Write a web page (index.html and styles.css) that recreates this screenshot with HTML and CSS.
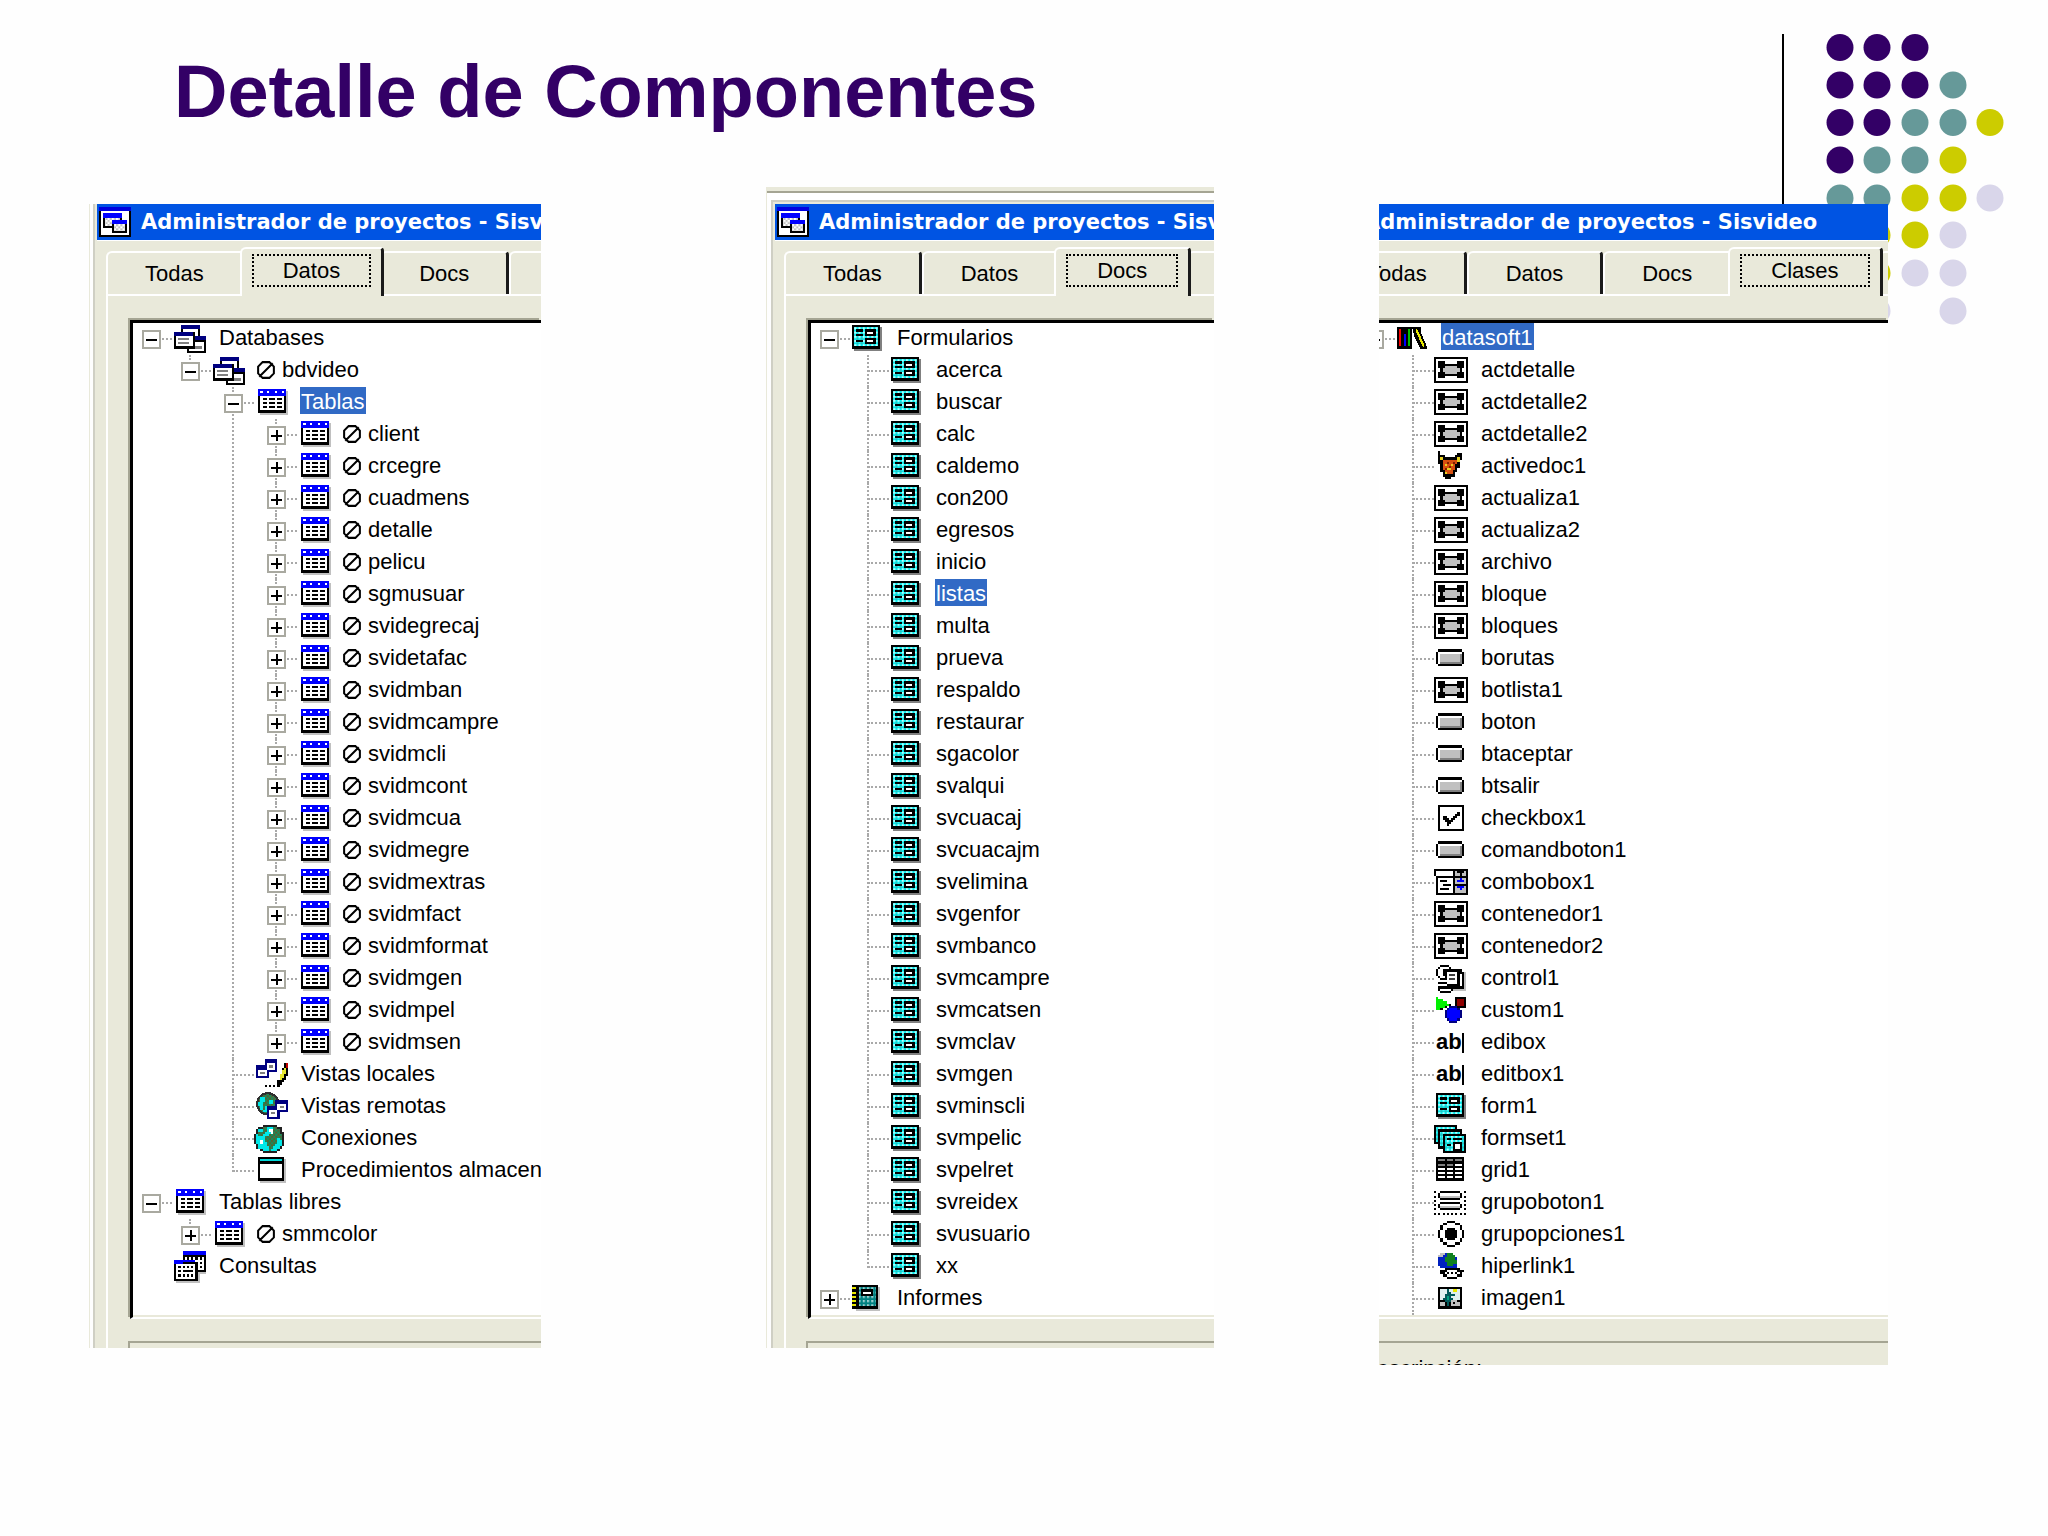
FILE: index.html
```html
<!DOCTYPE html>
<html lang="es">
<head>
    <meta charset="UTF-8">
    <meta name="viewport" content="width=device-width, initial-scale=1.0">
    <title>Detalle de Componentes</title>
    <link rel="stylesheet" href="styles.css">
</head>
<body>

    <!-- icon set -->
    <svg class="sprite" aria-hidden="true">
        <defs>
            <pattern id="dither" width="2" height="2" patternUnits="userSpaceOnUse">
                <rect width="2" height="2" fill="#00f0f0"/>
                <rect width="1" height="1" fill="#b8ffff"/>
                <rect x="1" y="1" width="1" height="1" fill="#30b8b8"/>
            </pattern>
            <pattern id="dither-gray" width="2" height="2" patternUnits="userSpaceOnUse">
                <rect width="2" height="2" fill="#fff"/>
                <rect width="1" height="1" fill="#c0c0c0"/>
                <rect x="1" y="1" width="1" height="1" fill="#c0c0c0"/>
            </pattern>
            <pattern id="dither-teal" width="2" height="2" patternUnits="userSpaceOnUse">
                <rect width="2" height="2" fill="#008080"/>
                <rect width="1" height="1" fill="#a0d0d0"/>
            </pattern>
            <pattern id="dither-land" width="2" height="2" patternUnits="userSpaceOnUse">
                <rect width="2" height="2" fill="#109060"/>
                <rect width="1" height="1" fill="#586030"/>
                <rect x="1" y="1" width="1" height="1" fill="#586030"/>
            </pattern>
        </defs>
        <symbol id="app" viewBox="0 0 15 14">
            <path fill="#000" d="M0 0h15v14H0z"/>
            <path fill="#fff" d="M1 2h13v11H1z"/>
            <path fill="#0000e0" d="M0 0h15v2H0z"/>
            <path fill="#000" d="M2 3h9v7H2z"/>
            <path fill="url(#dither-gray)" d="M3 5h7v4H3z"/>
            <path fill="#00f" d="M2 3h9v2H2z"/>
            <path fill="#000" d="M6 6h7v6H6z"/>
            <path fill="url(#dither-gray)" d="M7 8h5v3H7z"/>
            <path fill="#00f" d="M6 6h7v2H6z"/>
        </symbol>
        <symbol id="db" viewBox="0 0 16 15">
            <path fill="#000" d="M4 1h9v5H4z"/>
            <path fill="#fff" d="M5 3h7v3H5z"/>
            <path fill="#000080" d="M4 1h9v2H4z"/>
            <path fill="#000" d="M7 6h9v8H7z"/>
            <path fill="#fff" d="M8 9h7v4H8z"/>
            <path fill="#000080" d="M9 6h7v2H9z"/>
            <path fill="#808080" d="M10 11h4v1h-4z"/>
            <path fill="#000" d="M1 4h10v8H1z"/>
            <path fill="#fff" d="M2 6h8v5H2z"/>
            <path fill="#000080" d="M1 4h9v2H1z"/>
            <path fill="#808080" d="M3 7h5v1H3zM3 9h5v1H3z"/>
        </symbol>
        <symbol id="table" viewBox="0 0 16 15">
            <path fill="#c0c0c0" d="M3 2h13v11H3z"/>
            <path fill="#000" d="M2 1h13v11H2z"/>
            <path fill="#fff" d="M3 4h11v7H3z"/>
            <path fill="#00f" d="M2 1h13v3H2z"/>
            <path fill="#fff" d="M3 2h1v1H3zM6 2h1v1H6zM10 2h1v1h-1zM13 2h1v1h-1z"/>
            <path fill="#000" d="M4 5h2v1H4zM7 5h3v1H7zM11 5h2v1h-2zM4 7h2v1H4zM7 7h3v1H7zM11 7h2v1h-2zM4 9h2v1H4zM7 9h3v1H7zM11 9h2v1h-2z"/>
        </symbol>
        <symbol id="query" viewBox="0 0 16 15">
            <path fill="#c0c0c0" d="M6 2h10v9H6zM2 6h11v9H2z"/>
            <path fill="#000" d="M5 1h11v9H5z"/>
            <path fill="#fff" d="M6 3h9v6H6z"/>
            <path fill="#00f" d="M5 0h11v2H5z"/>
            <path fill="#000" d="M7 3h1v1H7zM9 3h1v1H9zM11 3h1v1h-1zM13 3h1v1h-1zM13 5h1v1h-1zM13 7h1v1h-1z"/>
            <path fill="#000" d="M1 5h11v9H1z"/>
            <path fill="#fff" d="M2 6h9v7H2z"/>
            <path fill="#00f" d="M1 4h10v2H1z"/>
            <path fill="#000" d="M5 5h7v1H5zM3 7h1v1H3zM5 7h1v1H5zM7 7h1v1H7zM9 7h1v1H9zM3 9h1v1H3zM5 9h5v1H5zM3 11h1v1H3zM5 11h1v1H5zM7 11h1v1H7zM9 11h1v1H9z"/>
        </symbol>
        <symbol id="localview" viewBox="0 0 16 15">
            <path fill="#000080" d="M5 0h6v6H5zM1 3h6v6H1z"/>
            <path fill="#fff" d="M6 2h4v3H6zM2 5h4v3H2z"/>
            <path fill="#808080" d="M7 3h2v1H7zM3 6h2v1H3z"/>
            <path fill="#000" d="M14 2h3v3h-1v3h-1v2h-1v1h-1v1h-1v1h-1v-3h1V7h1V4h1z"/>
            <path fill="#e8e830" d="M14 4h1v3h-1v2h-1v1h-1V7h1V5h1z"/>
            <path fill="#c00000" d="M15 2h1v2h-1z"/>
            <path fill="#000" d="M5 12h1v1H5zM7 12h1v1H7zM9 12h1v1H9z"/>
        </symbol>
        <symbol id="remoteview" viewBox="0 0 16 15">
            <circle cx="6.500" cy="6" r="5.500" fill="#303030"/>
            <circle cx="6.500" cy="6" r="4.500" fill="url(#dither-land)"/>
            <path fill="#00e8e8" d="M3 3h2v2H3zM2 5h2v4H3V7H2zM7 4h2v2H7zM5 7h2v2H5zM4 9h2v1H4z"/>
            <path fill="#000080" d="M10 4h6v6h-6zM6 7h6v6H6z"/>
            <path fill="#fff" d="M11 6h4v3h-4zM7 9h4v3H7z"/>
            <path fill="#808080" d="M12 7h2v1h-2zM8 10h2v1H8z"/>
        </symbol>
        <symbol id="globe" viewBox="0 0 16 15">
            <path fill="#202020" d="M4 1h7v1h2v2h1v7h-1v1h-1v1h-1v1H4v-1H3v-1H1v-2H0V5h1V3h1V2h2z"/>
            <path fill="#00e8e8" d="M4 2h7v1h1v2h1v6h-1v1h-1v1H4v-1H2v-2H1V5h1V3h2z"/>
            <path fill="url(#dither-land)" d="M4 2h2v2H5v1H4v1H2V4h2zM9 2h2v1h1v2h1v3h-1V7h-1v3h-1v1H9v1H8v1H7v-2H6V9H5V6h2V5h2z"/>
            <path fill="#fff" d="M7 3h2v2H8V4H7zM3 8h1v2H3z"/>
        </symbol>
        <symbol id="proc" viewBox="0 0 16 15">
            <path fill="#c0c0c0" d="M3 2h12v11H3z"/>
            <path fill="#000" d="M2 1h12v11H2z"/>
            <path fill="#fff" d="M3 4h10v7H3z"/>
            <path fill="#00d8d8" d="M3 2h10v1H3z"/>
        </symbol>
        <symbol id="form" viewBox="0 0 16 15">
            <path fill="#808080" d="M2 2h13v11H2z"/>
            <path fill="#000" d="M1 1h13v11H1z"/>
            <path fill="url(#dither)" d="M2 2h11v9H2z"/>
            <path fill="#000" d="M3 3h3v1H3zM3 5h3v1H3zM3 8h3v1H3zM7 3h5v3H7zM7 7h5v3H7z"/>
            <path fill="#fff" d="M8 4h3v1H8zM8 8h3v1H8z"/>
        </symbol>
        <symbol id="report" viewBox="0 0 16 15">
            <path fill="#c0c0c0" d="M3 2h11v11H3z"/>
            <path fill="#000" d="M2 1h11v11H2zM1 1h1v1H1zM1 3h1v1H1zM1 5h1v1H1zM1 7h1v1H1zM1 9h1v1H1zM1 11h1v1H1z"/>
            <path fill="#e8e800" d="M1 2h2v1H1zM1 4h2v1H1zM1 6h2v1H1zM1 8h2v1H1zM1 10h2v1H1z"/>
            <path fill="url(#dither-teal)" d="M4 2h8v9H4z"/>
            <path fill="#000" d="M5 3h6v3H5z"/>
            <path fill="#fff" d="M6 4h4v1H6z"/>
        </symbol>
        <symbol id="books" viewBox="0 0 16 15">
            <path fill="#000" d="M1 2h7v10H1zM8 2h4v2l3 7v1h-3l-3-6z"/>
            <path fill="#f00" d="M2 3h1v8H2z"/>
            <path fill="#00f" d="M4 5h1v6H4z"/>
            <path fill="#00c000" d="M6 3h1v8H6z"/>
            <path fill="none" stroke="#e8e800" d="M10 3l3.500 8"/>
        </symbol>
        <symbol id="container" viewBox="0 0 16 15">
            <path fill="#000" d="M0 1h16v12H0z"/>
            <path fill="#fff" d="M1 2h14v10H1z"/>
            <path fill="#000" d="M3 4h10v6H3zM2 3h3v3H2zM11 3h3v3h-3zM2 8h3v3H2zM11 8h3v3h-3z"/>
            <path fill="#c0c0c0" d="M5 5h6v4H5zM4 6h1v2H4zM11 6h1v2h-1z"/>
        </symbol>
        <symbol id="fox" viewBox="0 0 16 15">
            <path fill="#000" d="M2 0h1v2h2v1h5V2h1V1h2v3h-1v4h-1v2h-1v2H8v1H5v-1H4v-2H3V6H2z"/>
            <path fill="#d85010" d="M4 4h7v2h-1v3H9v2H5V9H4z"/>
            <path fill="#e8d020" d="M3 3h1v1H3zM11 3h1v2h-1zM5 6h1v1H5zM8 6h1v1H8zM6 8h2v1H6zM5 10h1v1H5z"/>
            <path fill="#802000" d="M6 5h1v1H6zM9 5h1v1H9zM7 7h1v1H7zM5 8h1v1H5z"/>
        </symbol>
        <symbol id="button" viewBox="0 0 16 15">
            <path fill="#000" d="M2 3h11v1h1v6h-1v1H2v-1H1V4h1z"/>
            <path fill="#fff" d="M2 4h11v6H2z"/>
            <path fill="#808080" d="M3 9h9V5h1v5H3z"/>
            <path fill="#c0c0c0" d="M3 5h9v4H3z"/>
        </symbol>
        <symbol id="check" viewBox="0 0 16 15">
            <path fill="#000" d="M2 1h12v12H2z"/>
            <path fill="#fff" d="M3 2h10v10H3z"/>
            <path fill="#000" d="M4 6h2v1h1v1h1V7h1V6h1V5h1V4h1v2h-1v1h-1v1H9v1H8v1H7v1H6V9H5V8H4z"/>
        </symbol>
        <symbol id="combo" viewBox="0 0 16 15">
            <path fill="#000" d="M0 1h16v12H1V4H0z"/>
            <path fill="#fff" d="M1 2h8v2H1zM2 5h7v7H2z"/>
            <path fill="#c0c0c0" d="M10 2h5v2h-5zM10 5h5v3h-5zM10 9h5v3h-5z"/>
            <path fill="#000" d="M3 6h3v1H3zM4 8h4v1H4zM3 10h4v1H3zM11 2h3v1h-3zM12 3h1v1h-1z"/>
            <path fill="#00f" d="M12 5h1v1h-1zM11 6h3v1h-3zM11 9h3v1h-3zM12 10h1v1h-1z"/>
        </symbol>
        <symbol id="control" viewBox="0 0 16 15">
            <path fill="#c0c0c0" d="M7 4h8v9H7z"/>
            <path fill="#000" d="M3 1h4v1H3zM2 2h1v1H2zM7 2h1v1H7zM1 3h1v3H1zM2 6h1v1H2zM4 3h2v3H4zM3 7h3v1H3zM5 3h8v1h1v8H7v-1H6V8H5z"/>
            <path fill="#fff" d="M6 4h5v6H6zM12 5h1v6h-1z"/>
            <path fill="#404040" d="M7 5h3v1H7zM7 7h3v1H7z"/>
            <path fill="#000" d="M2 9h4v1H2zM3 11h5v1h1v1H8v1H3v-1H2v-2h1z"/>
            <path fill="#fff" d="M3 12h5v1H3z"/>
        </symbol>
        <symbol id="custom" viewBox="0 0 16 15">
            <path fill="#000" d="M1 1h1v1h2v1h2v1h2v1H6v1H4v1H1z"/>
            <path fill="#00f000" d="M1 1h1v1h2v1h2v1h1v1H5v1H3v1H1z"/>
            <path fill="#000" d="M10 1h5v5h-5z"/>
            <path fill="#900000" d="M11 2h3v3h-3z"/>
            <path fill="#000080" d="M7 5h4v1h1v1h1v4h-1v1h-1v1H7v-1H6v-1H5V7h1V6h1z"/>
            <path fill="#00f" d="M7 6h4v1h1v4h-1v1H7v-1H6V7h1z"/>
        </symbol>
        <symbol id="formset" viewBox="0 0 16 15">
            <path fill="#000" d="M0 1h11v9H0z"/>
            <path fill="url(#dither)" d="M1 2h9v7H1z"/>
            <path fill="#000" d="M2 3h11v9H2z"/>
            <path fill="url(#dither)" d="M3 4h9v7H3z"/>
            <path fill="#000" d="M4 5h11v9H4z"/>
            <path fill="url(#dither)" d="M5 6h9v7H5z"/>
            <path fill="#000" d="M6 7h2v1H6zM9 7h4v1H9zM6 10h2v1H6zM9 9h4v4H9z"/>
            <path fill="#fff" d="M10 10h2v2h-2z"/>
        </symbol>
        <symbol id="grid" viewBox="0 0 16 15">
            <path fill="#000" d="M1 1h13v11H1z"/>
            <path fill="#808080" d="M2 2h3v1H2zM6 2h3v1H6zM10 2h3v1h-3zM2 4h3v1H2zM6 4h3v1H6z"/>
            <path fill="#fff" d="M10 4h3v1h-3zM2 6h3v1H2zM6 6h3v1H6zM10 6h3v1h-3zM2 8h3v1H2zM6 8h3v1H6zM10 8h3v1h-3zM2 10h3v1H2zM6 10h3v1H6zM10 10h3v1h-3z"/>
        </symbol>
        <symbol id="buttongroup" viewBox="0 0 16 15">
            <path fill="none" stroke="#000" stroke-dasharray="1 1" d="M0.500 2v11M14.500 2v11M0 12.500h15"/>
            <path fill="#000" d="M3 2h9v1h1v2h-1v1H3V5H2V3h1zM3 7h9v1h1v2h-1v1H3v-1H2V8h1z"/>
            <path fill="#fff" d="M3 3h9v1H3zM3 8h9v1H3z"/>
            <path fill="#c0c0c0" d="M3 4h9v1H3zM3 9h9v1H3z"/>
        </symbol>
        <symbol id="radio" viewBox="0 0 16 15">
            <path fill="#000" d="M6 1h4v1h2v1h1v2h1v4h-1v2h-1v1h-2v1H6v-1H4v-1H3V9H2V5h1V3h1V2h2z"/>
            <path fill="#fff" d="M6 2h4v1h2v2h1v4h-1v2h-2v1H6v-1H4V9H3V5h1V3h2z"/>
            <path fill="#000" d="M6 4h4v1h1v4h-1v1H6V9H5V5h1z"/>
        </symbol>
        <symbol id="link" viewBox="0 0 16 15">
            <path fill="#0020c0" d="M4 1h5v1h1v1h1v5H9v1H5V8H3V7H2V3h2z"/>
            <path fill="#108020" d="M6 1h3v1h1v2h1v2H9v1H6V5H5V3h1z"/>
            <path fill="#c0c0c0" d="M3 1h2v1H3zM2 2h2v1H2z"/>
            <path fill="#000" d="M5 8h7v1h2v1h-1v2h-2v1H6v-1H4v-1H3V9h2z"/>
            <path fill="#fff" d="M5 10h1V9h5v1h1v1h-1v1H6v-1H5z"/>
            <path fill="#000" d="M6 10h1v1H6zM8 10h1v1H8zM10 10h1v1h-1z"/>
        </symbol>
        <symbol id="image" viewBox="0 0 16 15">
            <path fill="#000" d="M2 2h11v10H2z"/>
            <path fill="#e0f0f0" d="M3 3h9v5H3z"/>
            <path fill="#c0c0c0" d="M3 9h2v2H3zM8 8h4v3H8z"/>
            <path fill="#005858" d="M6 3h1v1h1v1h2v1H8v1h1v1H8v1H7v2H6V9H5V8H4V7h1V5h1z"/>
            <path fill="#00a080" d="M6 6h1v2H6z"/>
            <path fill="#e8e800" d="M9 3h2v1H9z"/>
            <path fill="#000" d="M9 9h1v1H9zM11 8h1v1h-1zM3 8h1v1H3z"/>
        </symbol>
        <symbol id="excluded" viewBox="0 0 8 8">
            <path fill="none" stroke="#000" stroke-width="0.900" d="M2.500 0.500h3l2 2v3l-2 2h-3l-2-2v-3zM1 7l6-6"/>
        </symbol>
    </svg>

    <header class="slide-header">
        <h1>Detalle de Componentes</h1>
        <svg class="dots" width="222" height="300" viewBox="0 0 222 300" aria-hidden="true">
            <path stroke="#000" stroke-width="2" d="M1 0v180"/>
            <g fill="#330066">
                <circle cx="58" cy="13.500" r="13.500"/><circle cx="95" cy="13.500" r="13.500"/><circle cx="133" cy="13.500" r="13.500"/>
                <circle cx="58" cy="51" r="13.500"/><circle cx="95" cy="51" r="13.500"/><circle cx="133" cy="51" r="13.500"/>
                <circle cx="58" cy="88.500" r="13.500"/><circle cx="95" cy="88.500" r="13.500"/>
                <circle cx="58" cy="126" r="13.500"/>
            </g>
            <g fill="#669999">
                <circle cx="171" cy="51" r="13.500"/>
                <circle cx="133" cy="88.500" r="13.500"/><circle cx="171" cy="88.500" r="13.500"/>
                <circle cx="95" cy="126" r="13.500"/><circle cx="133" cy="126" r="13.500"/>
                <circle cx="58" cy="164" r="13.500"/><circle cx="95" cy="164" r="13.500"/>
            </g>
            <g fill="#cccc00">
                <circle cx="208" cy="88.500" r="13.500"/>
                <circle cx="171" cy="126" r="13.500"/>
                <circle cx="133" cy="164" r="13.500"/><circle cx="171" cy="164" r="13.500"/>
                <circle cx="95" cy="201" r="13.500"/><circle cx="133" cy="201" r="13.500"/>
                <circle cx="95" cy="239" r="13.500"/>
            </g>
            <g fill="#d9d6ea">
                <circle cx="208" cy="164" r="13.500"/>
                <circle cx="171" cy="201" r="13.500"/>
                <circle cx="133" cy="239" r="13.500"/><circle cx="171" cy="239" r="13.500"/>
                <circle cx="95" cy="277" r="13.500"/><circle cx="171" cy="277" r="13.500"/>
            </g>
        </svg>
    </header>

    <main class="shots">

        <!-- Datos -->
        <section class="shot shot-datos">
            <div class="window">
                <div class="titlebar"><svg class="app-icon"><use href="#app"/></svg>Administrador de proyectos - Sisvideo</div>
                <div class="tabs">
                    <button class="tab">Todas</button>
                    <button class="tab selected"><span>Datos</span></button>
                    <button class="tab">Docs</button>
                    <button class="tab" aria-label="Clases"></button>
                </div>
                <div class="page">
                    <ul class="tree">
                        <li><div class="row"><button class="toggle open" aria-label="Databases"></button><svg class="icon"><use href="#db"/></svg><a href="#">Databases</a></div>
                            <ul>
                                <li><div class="row"><button class="toggle open" aria-label="bdvideo"></button><svg class="icon"><use href="#db"/></svg><svg class="excluded"><use href="#excluded"/></svg><a href="#">bdvideo</a></div>
                                    <ul class="deep">
                                        <li><div class="row"><button class="toggle open" aria-label="Tablas"></button><svg class="icon"><use href="#table"/></svg><a href="#" class="current">Tablas</a></div>
                                            <ul class="deep">
                                                <li><div class="row"><button class="toggle" aria-label="client"></button><svg class="icon"><use href="#table"/></svg><svg class="excluded"><use href="#excluded"/></svg><a href="#">client</a></div></li>
                                                <li><div class="row"><button class="toggle" aria-label="crcegre"></button><svg class="icon"><use href="#table"/></svg><svg class="excluded"><use href="#excluded"/></svg><a href="#">crcegre</a></div></li>
                                                <li><div class="row"><button class="toggle" aria-label="cuadmens"></button><svg class="icon"><use href="#table"/></svg><svg class="excluded"><use href="#excluded"/></svg><a href="#">cuadmens</a></div></li>
                                                <li><div class="row"><button class="toggle" aria-label="detalle"></button><svg class="icon"><use href="#table"/></svg><svg class="excluded"><use href="#excluded"/></svg><a href="#">detalle</a></div></li>
                                                <li><div class="row"><button class="toggle" aria-label="pelicu"></button><svg class="icon"><use href="#table"/></svg><svg class="excluded"><use href="#excluded"/></svg><a href="#">pelicu</a></div></li>
                                                <li><div class="row"><button class="toggle" aria-label="sgmusuar"></button><svg class="icon"><use href="#table"/></svg><svg class="excluded"><use href="#excluded"/></svg><a href="#">sgmusuar</a></div></li>
                                                <li><div class="row"><button class="toggle" aria-label="svidegrecaj"></button><svg class="icon"><use href="#table"/></svg><svg class="excluded"><use href="#excluded"/></svg><a href="#">svidegrecaj</a></div></li>
                                                <li><div class="row"><button class="toggle" aria-label="svidetafac"></button><svg class="icon"><use href="#table"/></svg><svg class="excluded"><use href="#excluded"/></svg><a href="#">svidetafac</a></div></li>
                                                <li><div class="row"><button class="toggle" aria-label="svidmban"></button><svg class="icon"><use href="#table"/></svg><svg class="excluded"><use href="#excluded"/></svg><a href="#">svidmban</a></div></li>
                                                <li><div class="row"><button class="toggle" aria-label="svidmcampre"></button><svg class="icon"><use href="#table"/></svg><svg class="excluded"><use href="#excluded"/></svg><a href="#">svidmcampre</a></div></li>
                                                <li><div class="row"><button class="toggle" aria-label="svidmcli"></button><svg class="icon"><use href="#table"/></svg><svg class="excluded"><use href="#excluded"/></svg><a href="#">svidmcli</a></div></li>
                                                <li><div class="row"><button class="toggle" aria-label="svidmcont"></button><svg class="icon"><use href="#table"/></svg><svg class="excluded"><use href="#excluded"/></svg><a href="#">svidmcont</a></div></li>
                                                <li><div class="row"><button class="toggle" aria-label="svidmcua"></button><svg class="icon"><use href="#table"/></svg><svg class="excluded"><use href="#excluded"/></svg><a href="#">svidmcua</a></div></li>
                                                <li><div class="row"><button class="toggle" aria-label="svidmegre"></button><svg class="icon"><use href="#table"/></svg><svg class="excluded"><use href="#excluded"/></svg><a href="#">svidmegre</a></div></li>
                                                <li><div class="row"><button class="toggle" aria-label="svidmextras"></button><svg class="icon"><use href="#table"/></svg><svg class="excluded"><use href="#excluded"/></svg><a href="#">svidmextras</a></div></li>
                                                <li><div class="row"><button class="toggle" aria-label="svidmfact"></button><svg class="icon"><use href="#table"/></svg><svg class="excluded"><use href="#excluded"/></svg><a href="#">svidmfact</a></div></li>
                                                <li><div class="row"><button class="toggle" aria-label="svidmformat"></button><svg class="icon"><use href="#table"/></svg><svg class="excluded"><use href="#excluded"/></svg><a href="#">svidmformat</a></div></li>
                                                <li><div class="row"><button class="toggle" aria-label="svidmgen"></button><svg class="icon"><use href="#table"/></svg><svg class="excluded"><use href="#excluded"/></svg><a href="#">svidmgen</a></div></li>
                                                <li><div class="row"><button class="toggle" aria-label="svidmpel"></button><svg class="icon"><use href="#table"/></svg><svg class="excluded"><use href="#excluded"/></svg><a href="#">svidmpel</a></div></li>
                                                <li><div class="row"><button class="toggle" aria-label="svidmsen"></button><svg class="icon"><use href="#table"/></svg><svg class="excluded"><use href="#excluded"/></svg><a href="#">svidmsen</a></div></li>
                                            </ul>
                                        </li>
                                        <li><div class="row"><svg class="icon"><use href="#localview"/></svg><a href="#">Vistas locales</a></div></li>
                                        <li><div class="row"><svg class="icon"><use href="#remoteview"/></svg><a href="#">Vistas remotas</a></div></li>
                                        <li><div class="row"><svg class="icon"><use href="#globe"/></svg><a href="#">Conexiones</a></div></li>
                                        <li><div class="row"><svg class="icon"><use href="#proc"/></svg><a href="#">Procedimientos almacenados</a></div></li>
                                    </ul>
                                </li>
                            </ul>
                        </li>
                        <li><div class="row"><button class="toggle open" aria-label="Tablas libres"></button><svg class="icon"><use href="#table"/></svg><a href="#">Tablas libres</a></div>
                            <ul>
                                <li><div class="row"><button class="toggle" aria-label="smmcolor"></button><svg class="icon"><use href="#table"/></svg><svg class="excluded"><use href="#excluded"/></svg><a href="#">smmcolor</a></div></li>
                            </ul>
                        </li>
                        <li><div class="row bare"><svg class="icon"><use href="#query"/></svg><a href="#">Consultas</a></div></li>
                    </ul>
                    <div class="description"></div>
                </div>
            </div>
        </section>

        <!-- Docs -->
        <section class="shot shot-docs">
            <div class="toolbar-edge"></div>
            <div class="window">
                <div class="titlebar"><svg class="app-icon"><use href="#app"/></svg>Administrador de proyectos - Sisvideo</div>
                <div class="tabs">
                    <button class="tab">Todas</button>
                    <button class="tab">Datos</button>
                    <button class="tab selected"><span>Docs</span></button>
                    <button class="tab" aria-label="Clases"></button>
                </div>
                <div class="page">
                    <ul class="tree">
                        <li><div class="row"><button class="toggle open" aria-label="Formularios"></button><svg class="icon"><use href="#form"/></svg><a href="#">Formularios</a></div>
                            <ul>
                                <li><div class="row"><svg class="icon"><use href="#form"/></svg><a href="#">acerca</a></div></li>
                                <li><div class="row"><svg class="icon"><use href="#form"/></svg><a href="#">buscar</a></div></li>
                                <li><div class="row"><svg class="icon"><use href="#form"/></svg><a href="#">calc</a></div></li>
                                <li><div class="row"><svg class="icon"><use href="#form"/></svg><a href="#">caldemo</a></div></li>
                                <li><div class="row"><svg class="icon"><use href="#form"/></svg><a href="#">con200</a></div></li>
                                <li><div class="row"><svg class="icon"><use href="#form"/></svg><a href="#">egresos</a></div></li>
                                <li><div class="row"><svg class="icon"><use href="#form"/></svg><a href="#">inicio</a></div></li>
                                <li><div class="row"><svg class="icon"><use href="#form"/></svg><a href="#" class="current">listas</a></div></li>
                                <li><div class="row"><svg class="icon"><use href="#form"/></svg><a href="#">multa</a></div></li>
                                <li><div class="row"><svg class="icon"><use href="#form"/></svg><a href="#">prueva</a></div></li>
                                <li><div class="row"><svg class="icon"><use href="#form"/></svg><a href="#">respaldo</a></div></li>
                                <li><div class="row"><svg class="icon"><use href="#form"/></svg><a href="#">restaurar</a></div></li>
                                <li><div class="row"><svg class="icon"><use href="#form"/></svg><a href="#">sgacolor</a></div></li>
                                <li><div class="row"><svg class="icon"><use href="#form"/></svg><a href="#">svalqui</a></div></li>
                                <li><div class="row"><svg class="icon"><use href="#form"/></svg><a href="#">svcuacaj</a></div></li>
                                <li><div class="row"><svg class="icon"><use href="#form"/></svg><a href="#">svcuacajm</a></div></li>
                                <li><div class="row"><svg class="icon"><use href="#form"/></svg><a href="#">svelimina</a></div></li>
                                <li><div class="row"><svg class="icon"><use href="#form"/></svg><a href="#">svgenfor</a></div></li>
                                <li><div class="row"><svg class="icon"><use href="#form"/></svg><a href="#">svmbanco</a></div></li>
                                <li><div class="row"><svg class="icon"><use href="#form"/></svg><a href="#">svmcampre</a></div></li>
                                <li><div class="row"><svg class="icon"><use href="#form"/></svg><a href="#">svmcatsen</a></div></li>
                                <li><div class="row"><svg class="icon"><use href="#form"/></svg><a href="#">svmclav</a></div></li>
                                <li><div class="row"><svg class="icon"><use href="#form"/></svg><a href="#">svmgen</a></div></li>
                                <li><div class="row"><svg class="icon"><use href="#form"/></svg><a href="#">svminscli</a></div></li>
                                <li><div class="row"><svg class="icon"><use href="#form"/></svg><a href="#">svmpelic</a></div></li>
                                <li><div class="row"><svg class="icon"><use href="#form"/></svg><a href="#">svpelret</a></div></li>
                                <li><div class="row"><svg class="icon"><use href="#form"/></svg><a href="#">svreidex</a></div></li>
                                <li><div class="row"><svg class="icon"><use href="#form"/></svg><a href="#">svusuario</a></div></li>
                                <li><div class="row"><svg class="icon"><use href="#form"/></svg><a href="#">xx</a></div></li>
                            </ul>
                        </li>
                        <li><div class="row"><button class="toggle" aria-label="Informes"></button><svg class="icon"><use href="#report"/></svg><a href="#">Informes</a></div></li>
                    </ul>
                    <div class="description"></div>
                </div>
            </div>
        </section>

        <!-- Clases -->
        <section class="shot shot-clases">
            <div class="window">
                <div class="titlebar"><svg class="app-icon"><use href="#app"/></svg>Administrador de proyectos - Sisvideo</div>
                <div class="tabs">
                    <button class="tab">Todas</button>
                    <button class="tab">Datos</button>
                    <button class="tab">Docs</button>
                    <button class="tab selected"><span>Clases</span></button>
                    <button class="tab" aria-label="Otros"></button>
                </div>
                <div class="page">
                    <ul class="tree">
                        <li><div class="row"><button class="toggle open" aria-label="datasoft1"></button><svg class="icon"><use href="#books"/></svg><a href="#" class="current">datasoft1</a></div>
                            <ul class="more">
                                <li><div class="row"><svg class="icon"><use href="#container"/></svg><a href="#">actdetalle</a></div></li>
                                <li><div class="row"><svg class="icon"><use href="#container"/></svg><a href="#">actdetalle2</a></div></li>
                                <li><div class="row"><svg class="icon"><use href="#container"/></svg><a href="#">actdetalle2</a></div></li>
                                <li><div class="row"><svg class="icon"><use href="#fox"/></svg><a href="#">activedoc1</a></div></li>
                                <li><div class="row"><svg class="icon"><use href="#container"/></svg><a href="#">actualiza1</a></div></li>
                                <li><div class="row"><svg class="icon"><use href="#container"/></svg><a href="#">actualiza2</a></div></li>
                                <li><div class="row"><svg class="icon"><use href="#container"/></svg><a href="#">archivo</a></div></li>
                                <li><div class="row"><svg class="icon"><use href="#container"/></svg><a href="#">bloque</a></div></li>
                                <li><div class="row"><svg class="icon"><use href="#container"/></svg><a href="#">bloques</a></div></li>
                                <li><div class="row"><svg class="icon"><use href="#button"/></svg><a href="#">borutas</a></div></li>
                                <li><div class="row"><svg class="icon"><use href="#container"/></svg><a href="#">botlista1</a></div></li>
                                <li><div class="row"><svg class="icon"><use href="#button"/></svg><a href="#">boton</a></div></li>
                                <li><div class="row"><svg class="icon"><use href="#button"/></svg><a href="#">btaceptar</a></div></li>
                                <li><div class="row"><svg class="icon"><use href="#button"/></svg><a href="#">btsalir</a></div></li>
                                <li><div class="row"><svg class="icon"><use href="#check"/></svg><a href="#">checkbox1</a></div></li>
                                <li><div class="row"><svg class="icon"><use href="#button"/></svg><a href="#">comandboton1</a></div></li>
                                <li><div class="row"><svg class="icon"><use href="#combo"/></svg><a href="#">combobox1</a></div></li>
                                <li><div class="row"><svg class="icon"><use href="#container"/></svg><a href="#">contenedor1</a></div></li>
                                <li><div class="row"><svg class="icon"><use href="#container"/></svg><a href="#">contenedor2</a></div></li>
                                <li><div class="row"><svg class="icon"><use href="#control"/></svg><a href="#">control1</a></div></li>
                                <li><div class="row"><svg class="icon"><use href="#custom"/></svg><a href="#">custom1</a></div></li>
                                <li><div class="row"><span class="icon edit-icon">ab</span><a href="#">edibox</a></div></li>
                                <li><div class="row"><span class="icon edit-icon">ab</span><a href="#">editbox1</a></div></li>
                                <li><div class="row"><svg class="icon"><use href="#form"/></svg><a href="#">form1</a></div></li>
                                <li><div class="row"><svg class="icon"><use href="#formset"/></svg><a href="#">formset1</a></div></li>
                                <li><div class="row"><svg class="icon"><use href="#grid"/></svg><a href="#">grid1</a></div></li>
                                <li><div class="row"><svg class="icon"><use href="#buttongroup"/></svg><a href="#">grupoboton1</a></div></li>
                                <li><div class="row"><svg class="icon"><use href="#radio"/></svg><a href="#">grupopciones1</a></div></li>
                                <li><div class="row"><svg class="icon"><use href="#link"/></svg><a href="#">hiperlink1</a></div></li>
                                <li><div class="row"><svg class="icon"><use href="#image"/></svg><a href="#">imagen1</a></div></li>
                            </ul>
                        </li>
                    </ul>
                    <div class="description">Descripción:</div>
                </div>
            </div>
        </section>

    </main>

</body>
</html>
```
FILE: styles.css
```css
* {
    margin: 0;
    padding: 0;
    box-sizing: border-box;
}

body {
    background: #fefefe;
    font-family: "Liberation Sans", Arial, sans-serif;
    font-size: 22px;
    color: #000;
    overflow-x: hidden;
}

.sprite {
    position: absolute;
    width: 0;
    height: 0;
}

/* slide heading */

.slide-header {
    position: relative;
    height: 187px;
    padding: 50px 174px;
}

h1 {
    font-size: 74px;
    line-height: 84px;
    color: #330066;
}

.dots {
    position: absolute;
    top: 34px;
    right: 44px;
}

/* three cropped windows side by side */

.shots {
    position: relative;
    display: grid;
    grid-template-columns: 452fr 225fr 448fr 165fr 509fr;
    align-items: start;
    padding: 0 160px 0 89px;
}

.shot {
    overflow: hidden;
}

.shot-datos {
    grid-column: 1;
    margin-top: 17px;
    border-left: 1px solid #e9e9da;
}

.shot-datos .window {
    margin: -4px 0 0 3px;
}

.shot-docs {
    grid-column: 3;
    border-left: 1px solid #e9e9da;
}

.shot-docs .window {
    margin-left: 4px;
}

.shot-clases {
    grid-column: 5;
    margin-top: 17px;
}

.shot-clases .window {
    margin: -4px 0 0 -63px;
}

.toolbar-edge {
    height: 13px;
    background: #fff;
    border-top: 4px solid #e9e9da;
    box-shadow: inset 0 2px #a5a593;
}

.window {
    background: #e9e9da;
    border-left: 2px solid #cfcfc4;
    border-top: 2px solid #cfcfc4;
    padding: 2px 0 0 2px;
}

.titlebar {
    display: flex;
    align-items: center;
    gap: 10px;
    height: 36px;
    padding-left: 2px;
    background: #0054e3;
    color: #fff;
    font: bold 21px "DejaVu Sans", Verdana, sans-serif;
    white-space: nowrap;
}

.app-icon {
    width: 32px;
    height: 30px;
    flex: none;
    shape-rendering: crispEdges;
}

/* tabs */

.tabs {
    display: flex;
    align-items: flex-end;
    height: 54px;
    padding-left: 9px;
    border-top: 1px solid #fff;
}

.tab {
    flex: none;
    height: 43px;
    padding: 0 37px;
    background: #e9e9da;
    border: 2px solid #fff;
    border-right: 3px solid #1a1a1a;
    border-bottom: 0;
    border-radius: 6px 4px 0 0;
    font: inherit;
    color: inherit;
}

.tab:has(+ .selected) {
    border-right-color: #e9e9da;
}

.tab.selected {
    position: relative;
    height: 49px;
    margin: 0 -4px -2px;
    padding: 0 10px 4px;
}

.tab.selected span {
    display: block;
    padding: 0 29px;
    line-height: 29px;
    border: 2px dotted #000;
}

.page {
    margin-left: 9px;
    border: 2px solid #fff;
    border-right: 0;
    border-bottom: 0;
    padding: 24px 0 0 22px;
}

/* project tree */

ul {
    list-style: none;
}

.tree {
    background: #fff;
    min-height: 999px;
    padding-left: 9px;
    border-left: 3px solid #000;
    border-top: 3px solid #000;
    border-bottom: 2px solid #fff;
    box-shadow: -2px -2px #a5a593, inset 0 -2px #e9e9da;
}

.tree ul {
    padding-left: 39px;
}

.tree .deep {
    padding-left: 43px;
}

.tree li {
    position: relative;
}

.tree ul > li::before {
    content: "";
    position: absolute;
    top: 0;
    bottom: 0;
    left: 8px;
    border-left: 2px dotted #a9a9a9;
}

.tree ul > li:last-child::before {
    bottom: auto;
    height: 17px;
}

.tree .more > li:last-child::before {
    height: 32px;
}

.row {
    display: flex;
    align-items: flex-start;
    height: 32px;
}

.row::before {
    content: "";
    width: 21px;
    margin: 15px 0 0 9px;
    border-top: 2px dotted #a9a9a9;
}

.row.bare::before {
    visibility: hidden;
}

.toggle {
    position: relative;
    width: 19px;
    height: 19px;
    margin: 7px 11px 0 -30px;
    border: 2px solid #a9a9a0;
    background:
        linear-gradient(#000, #000) center / 11px 2px no-repeat,
        linear-gradient(#000, #000) center / 2px 11px no-repeat,
        #fff;
}

.toggle.open {
    background: linear-gradient(#000, #000) center / 11px 2px no-repeat, #fff;
}

.icon {
    width: 34px;
    height: 32px;
    margin-right: 12px;
    overflow: visible;
    shape-rendering: crispEdges;
}

.edit-icon {
    padding: 2px 0 0 2px;
    font-size: 22px;
    font-weight: bold;
    line-height: 26px;
    background: linear-gradient(#000, #000) 28px 6px / 2px 20px no-repeat;
}

.excluded {
    width: 18px;
    height: 18px;
    margin: 6px 6px 0 0;
}

.row a {
    padding: 3px 1px 0;
    line-height: 24px;
    color: inherit;
    text-decoration: none;
    white-space: nowrap;
}

.row a.current {
    background: #316ac5;
    color: #fff;
}

.row::before,
.toggle,
.icon,
.excluded,
.row a {
    flex: none;
}

/* only the top edge of the description box is in view */

.description {
    height: 7px;
    margin: 22px 0 0 -2px;
    border: 2px solid #a5a593;
    border-right: 0;
    border-bottom: 0;
    overflow: hidden;
}

.shot-clases .description {
    height: 24px;
    padding: 11px 0 0 8px;
    line-height: 30px;
}
```
